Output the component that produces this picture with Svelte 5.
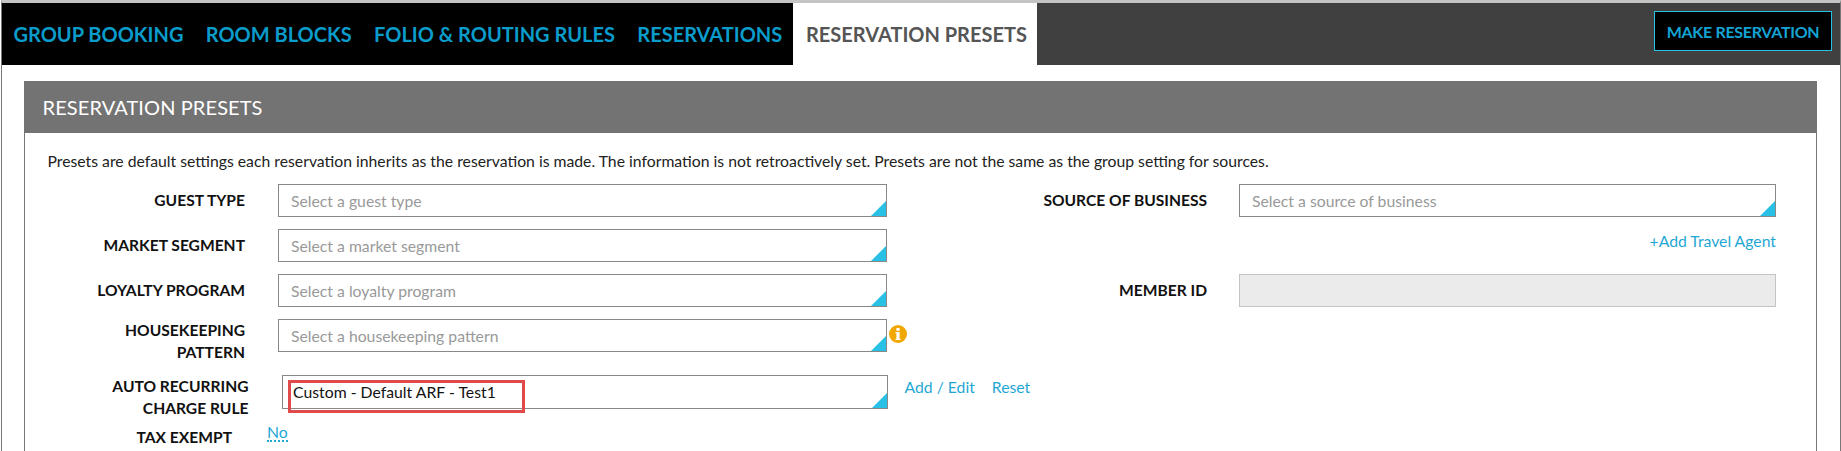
<script>
  const tabs = ['GROUP BOOKING', 'ROOM BLOCKS', 'FOLIO & ROUTING RULES', 'RESERVATIONS'];
  const leftFields = [
    { label: 'GUEST TYPE', placeholder: 'Select a guest type' },
    { label: 'MARKET SEGMENT', placeholder: 'Select a market segment' },
    { label: 'LOYALTY PROGRAM', placeholder: 'Select a loyalty program' },
  ];
</script>

<div class="page">
  <nav class="nav">
    <ul class="tabs">
      {#each tabs as tab}
        <li class="tab">{tab}</li>
      {/each}
      <li class="tab active">RESERVATION PRESETS</li>
    </ul>
    <button class="make">MAKE RESERVATION</button>
  </nav>

  <div class="content">
    <section class="panel">
      <h2 class="panel-title">RESERVATION PRESETS</h2>
      <div class="panel-body">
        <p class="help">Presets are default settings each reservation inherits as the reservation is made. The information is not retroactively set. Presets are not the same as the group setting for sources.</p>

        <div class="form">
          <div class="col col-left">
            {#each leftFields as f}
              <div class="field">
                <div class="label">{f.label}</div>
                <div class="select"><span class="placeholder">{f.placeholder}</span></div>
              </div>
            {/each}

            <div class="field">
              <div class="label two">HOUSEKEEPING<br />PATTERN</div>
              <div class="select"><span class="placeholder">Select a housekeeping pattern</span></div>
              <svg class="info" viewBox="0 0 18 18" width="18" height="18">
                <circle cx="9" cy="9" r="9" fill="#f0a800" />
                <rect x="7.4" y="3" width="3.2" height="2.8" fill="#fff" />
                <rect x="7.4" y="7" width="3.2" height="8" fill="#fff" />
                <rect x="6.4" y="7" width="2" height="1.2" fill="#fff" />
                <rect x="6.4" y="13.8" width="5.2" height="1.2" fill="#fff" />
              </svg>
            </div>

            <div class="field arf">
              <div class="label two">AUTO RECURRING<br />CHARGE RULE</div>
              <div class="select tall">
                <span class="value">Custom - Default ARF - Test1</span>
                <div class="highlight"></div>
              </div>
              <div class="actions">
                <span class="link">Add / Edit</span>
                <span class="link">Reset</span>
              </div>
            </div>

            <div class="field tax">
              <div class="label two">TAX EXEMPT</div>
              <span class="toggle">No</span>
            </div>
          </div>

          <div class="col col-right">
            <div class="field">
              <div class="label">SOURCE OF BUSINESS</div>
              <div class="select"><span class="placeholder">Select a source of business</span></div>
            </div>
            <div class="field add-row">
              <span class="link">+Add Travel Agent</span>
            </div>
            <div class="field">
              <div class="label">MEMBER ID</div>
              <div class="select disabled"></div>
            </div>
          </div>
        </div>
      </div>
    </section>
  </div>
</div>

<style>
  :global(body) {
    margin: 0;
    background: #fff;
    overflow: hidden;
    font-family: Lato, "Open Sans", sans-serif;
  }

  .page {
    box-sizing: border-box;
    width: 1840px;
    height: 451px;
    overflow: hidden;
    border-top: 3px solid #c4c4c4;
    border-left: 1px solid #777;
    border-right: 1px solid #777;
    margin-left: 1px;
  }

  .nav {
    display: flex;
    justify-content: space-between;
    align-items: flex-start;
    height: 62px;
    background: #404040;
  }

  .tabs {
    display: flex;
    margin: 0;
    padding: 0 0 0 0.3px;
    list-style: none;
    background: #000;
  }

  .tab {
    padding: 0 11.2px;
    line-height: 62px;
    font-size: 20px;
    font-weight: 700;
    color: #0a9ccb;
    white-space: nowrap;
  }

  .tab.active {
    background: #fff;
    color: #555;
    padding: 0 10.5px 0 12.5px;
  }

  .make {
    box-sizing: border-box;
    width: 178px;
    height: 40px;
    margin: 8px 8px 0 0;
    padding: 0;
    border: 1px solid #29c0e5;
    background: #000;
    color: #14a4d4;
    font-family: inherit;
    font-size: 16px;
    font-weight: 700;
    letter-spacing: -0.3px;
  }

  .content {
    padding: 16px 23px 0 22px;
  }

  .panel {
    border-left: 1px solid #777;
    border-right: 1px solid #777;
  }

  .panel-title {
    margin: 0 -1px;
    padding: 0 18.5px;
    height: 52px;
    line-height: 52px;
    background: #737373;
    color: #fff;
    font-size: 20px;
    font-weight: 400;
    letter-spacing: 0.1px;
  }

  .panel-body {
    padding: 17px 0 0;
  }

  .help {
    margin: 0 0 12px 22.5px;
    font-size: 15.75px;
    line-height: 22px;
    color: #222;
  }

  .form {
    display: flex;
  }

  .col-left {
    flex: none;
    width: 879px;
  }

  .field {
    display: flex;
    align-items: flex-start;
    margin-bottom: 12px;
  }

  .label {
    flex: none;
    width: 220px;
    margin-right: 33px;
    text-align: right;
    font-size: 15.6px;
    font-weight: 700;
    line-height: 32px;
    color: #111;
    white-space: nowrap;
  }

  .label.two {
    line-height: 22px;
  }

  .select {
    position: relative;
    box-sizing: border-box;
    flex: none;
    width: 608.5px;
    height: 33px;
    padding-left: 12px;
    border: 1px solid #888;
    background: #fff;
    font-size: 15.75px;
    line-height: 31px;
  }

  .select::after {
    content: "";
    position: absolute;
    right: 0;
    bottom: 0;
    border-style: solid;
    border-width: 0 0 15px 15px;
    border-color: transparent transparent #29c0e5 transparent;
  }

  .placeholder {
    color: #999;
  }

  .value {
    color: #111;
    margin-left: -1.5px;
    letter-spacing: 0.02px;
  }

  .select.disabled {
    background: #ebebeb;
    border-color: #c4c4c4;
  }

  .select.disabled::after {
    display: none;
  }

  .select.tall {
    height: 34px;
    width: 606px;
  }

  .highlight {
    position: absolute;
    left: 5px;
    top: 4px;
    width: 237.5px;
    height: 33px;
    box-sizing: border-box;
    border: 3px solid #e04a4a;
  }

  .info {
    flex: none;
    margin: 6px 0 0 2px;
  }

  .arf {
    margin-bottom: 7px;
    margin-left: 3.5px;
  }

  .actions {
    display: flex;
    flex: none;
    gap: 17px;
    margin-left: 17px;
    line-height: 24px;
    white-space: nowrap;
  }

  .link {
    font-size: 15.75px;
    color: #1fa7d4;
    white-space: nowrap;
  }

  .tax .label {
    width: 207px;
    margin-right: 35px;
  }

  .toggle {
    margin-top: -1px;
    font-size: 15.75px;
    line-height: 14px;
    color: #1fa7d4;
    border-bottom: 2px dotted #1fa7d4;
    padding-bottom: 1px;
  }

  .col-right .label {
    width: 303px;
    margin-right: 32px;
  }

  .add-row {
    justify-content: flex-end;
    width: 872px;
    min-height: 33px;
    line-height: 24px;
  }

  .col-right .select {
    width: 537px;
  }
</style>
